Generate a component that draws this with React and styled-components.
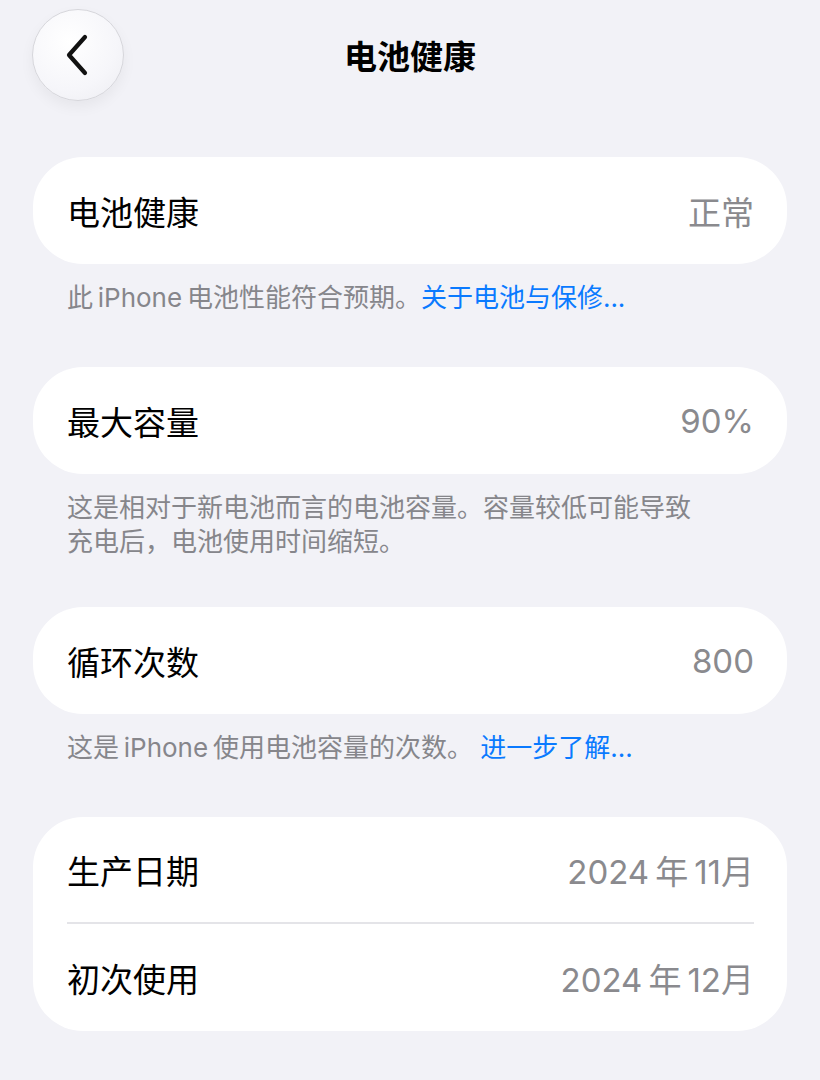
import React from 'react';
import styled, { createGlobalStyle } from 'styled-components';

const GlobalStyle = createGlobalStyle`
  body {
    margin: 0;
    background-color: #f2f2f7;
    font-family: Inter, "Noto Sans CJK SC", sans-serif;
    -webkit-font-smoothing: antialiased;
  }
`;

const Page = styled.div`
  min-height: 1080px;
  padding: 0 33px;
  box-sizing: border-box;
  background-color: #f2f2f7;
`;

const Header = styled.div`
  display: grid;
  grid-template-columns: 92px 1fr 92px;
  align-items: center;
  padding-top: 9px;
  margin-bottom: 56px;
`;

const BackButton = styled.div`
  width: 90px;
  height: 90px;
  margin-left: -1px;
  border-radius: 50%;
  border: 1px solid #d6d6db;
  background: radial-gradient(circle at 40% 35%, #ffffff 0%, #f6f6fa 60%, #ececf1 100%);
  box-shadow: 0 6px 14px rgba(0, 0, 0, 0.05);
  display: flex;
  align-items: center;
  justify-content: center;
  cursor: pointer;
`;

const Title = styled.h1`
  margin: 0;
  text-align: center;
  font-size: 33px;
  font-weight: 600;
  color: #000;
`;

const Section = styled.div`
  margin-bottom: ${p => p.$gap || 52}px;
`;

const Card = styled.div`
  background-color: #fff;
  border-radius: 50px;
  padding: 0 33px 0 34px;
`;

const Row = styled.div`
  height: 107px;
  display: flex;
  align-items: center;
  justify-content: space-between;
  border-bottom: ${p => (p.$divider ? '2px solid #e4e4e8' : 'none')};
  box-sizing: border-box;
`;

const Label = styled.span`
  font-size: 33px;
  color: #000;
`;

const Value = styled.span`
  font-size: 33px;
  color: #8a8a8e;
`;

const Footnote = styled.p`
  margin: 0;
  padding: 17px 34px 0;
  font-size: 26px;
  line-height: 34px;
  color: #86868b;
`;

const Link = styled.a`
  color: #0a7aff;
  text-decoration: none;
`;

function Chevron() {
  return (
    <svg width="30" height="44" viewBox="0 0 30 44">
      <path d="M22 4 L6 22 L22 40" fill="none" stroke="#111" strokeWidth="4.2" strokeLinecap="round" strokeLinejoin="round" />
    </svg>
  );
}

export default function App() {
  return (
    <Page>
      <GlobalStyle />
      <Header>
        <BackButton><Chevron /></BackButton>
        <Title>电池健康</Title>
        <div />
      </Header>

      <Section>
        <Card>
          <Row><Label>电池健康</Label><Value>正常</Value></Row>
        </Card>
        <Footnote>
          此{'\u2009'}iPhone{'\u2009'}电池性能符合预期。<Link>关于电池与保修...</Link>
        </Footnote>
      </Section>

      <Section $gap={48}>
        <Card>
          <Row><Label>最大容量</Label><Value>90%</Value></Row>
        </Card>
        <Footnote>
          这是相对于新电池而言的电池容量。容量较低可能导致<br />充电后，电池使用时间缩短。
        </Footnote>
      </Section>

      <Section>
        <Card>
          <Row><Label>循环次数</Label><Value>800</Value></Row>
        </Card>
        <Footnote>
          这是{'\u2009'}iPhone{'\u2009'}使用电池容量的次数。 <Link>进一步了解...</Link>
        </Footnote>
      </Section>

      <Section>
        <Card>
          <Row $divider><Label>生产日期</Label><Value>2024{'\u2009'}年{'\u2009'}11月</Value></Row>
          <Row><Label>初次使用</Label><Value>2024{'\u2009'}年{'\u2009'}12月</Value></Row>
        </Card>
      </Section>
    </Page>
  );
}
